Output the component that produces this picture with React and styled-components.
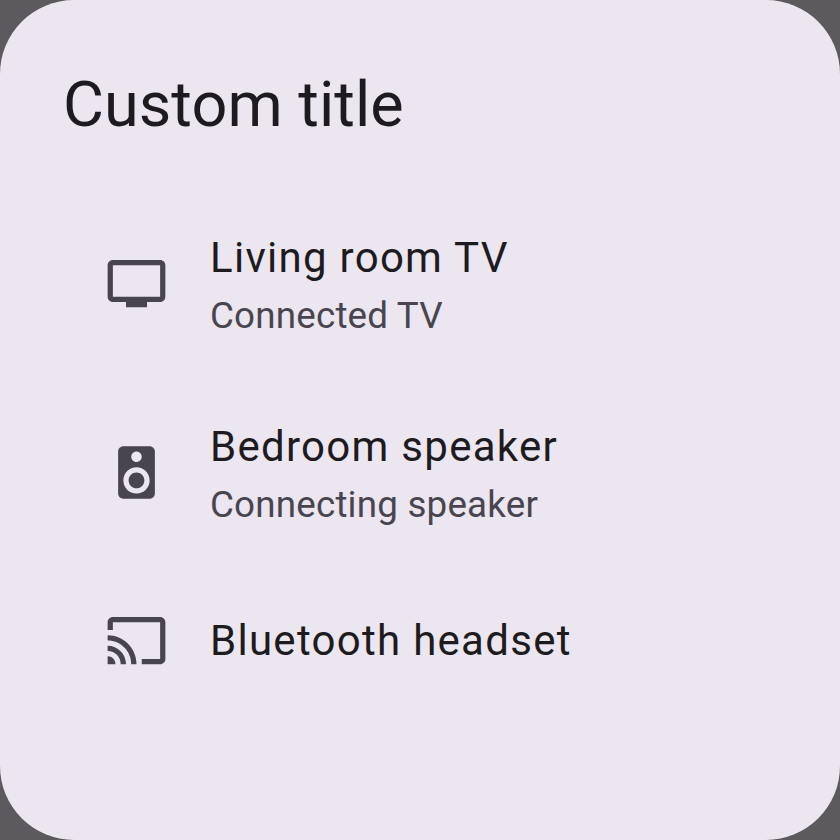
import React from "react";
import styled, { createGlobalStyle } from "styled-components";

const GlobalStyle = createGlobalStyle`
  * { box-sizing: border-box; }
  body { margin: 0; background: #5c5a5d; font-family: Roboto, sans-serif; }
`;

const Dialog = styled.main`
  width: 840px;
  height: 840px;
  padding: 63px 63px 0;
  border-radius: 74px;
  background: #ebe6ef;
  overflow: hidden;
`;

const Title = styled.h1`
  margin: 0;
  font-size: 63px;
  line-height: 84px;
  font-weight: 400;
  letter-spacing: 0.04px;
  color: #1d1b20;
`;

const DeviceList = styled.ul`
  margin: 42px 0 0;
  padding: 0;
  list-style: none;
`;

const DeviceRow = styled.li`
  display: flex;
  align-items: center;
  height: ${(p) => (p.$compact ? "146px" : "189px")};
  padding-left: 42px;
`;

const DeviceIcon = styled.svg`
  width: 63px;
  height: 63px;
  flex: none;
  margin-right: 42px;
  fill: #49454f;
`;

const DeviceText = styled.div`
  display: flex;
  flex-direction: column;
`;

const Name = styled.span`
  font-size: 42px;
  line-height: 63px;
  letter-spacing: 1.28px;
  color: #1d1b20;
`;

const Status = styled.span`
  margin-top: 1px;
  font-size: 36.75px;
  line-height: 51.5px;
  letter-spacing: 0.2px;
  color: #49454f;
`;

const paths = {
  tv: "M21 3H3c-1.1 0-2 .9-2 2v12c0 1.1.9 2 2 2h5v2h8v-2h5c1.1 0 1.99-.9 1.99-2L23 5c0-1.1-.9-2-2-2zm0 14H3V5h18v12z",
  speaker: "M17 2H7c-1.1 0-2 .9-2 2v16c0 1.1.9 1.99 2 1.99L17 22c1.1 0 2-.9 2-2V4c0-1.1-.9-2-2-2zm-5 2c1.1 0 2 .9 2 2s-.9 2-2 2c-1.11 0-2-.9-2-2s.89-2 2-2zm0 16c-2.76 0-5-2.24-5-5s2.24-5 5-5 5 2.24 5 5-2.24 5-5 5zm0-8c-1.66 0-3 1.34-3 3s1.34 3 3 3 3-1.34 3-3-1.34-3-3-3z",
  cast: "M21 3H3c-1.1 0-2 .9-2 2v3h2V5h18v14h-7v2h7c1.1 0 2-.9 2-2V5c0-1.1-.9-2-2-2zM1 18v3h3c0-1.66-1.34-3-3-3zm0-4v2c2.76 0 5 2.24 5 5h2c0-3.87-3.13-7-7-7zm0-4v2c4.97 0 9 4.03 9 9h2c0-6.08-4.93-11-11-11z",
};

const devices = [
  { icon: "tv", name: "Living room TV", status: "Connected TV" },
  { icon: "speaker", name: "Bedroom speaker", status: "Connecting speaker" },
  { icon: "cast", name: "Bluetooth headset" },
];

export default function App() {
  return (
    <>
      <GlobalStyle />
      <Dialog>
        <Title>Custom title</Title>
        <DeviceList>
          {devices.map((d) => (
            <DeviceRow key={d.name} $compact={!d.status}>
              <DeviceIcon viewBox="0 0 24 24" aria-hidden="true">
                <path d={paths[d.icon]} />
              </DeviceIcon>
              <DeviceText>
                <Name>{d.name}</Name>
                {d.status && <Status>{d.status}</Status>}
              </DeviceText>
            </DeviceRow>
          ))}
        </DeviceList>
      </Dialog>
    </>
  );
}
